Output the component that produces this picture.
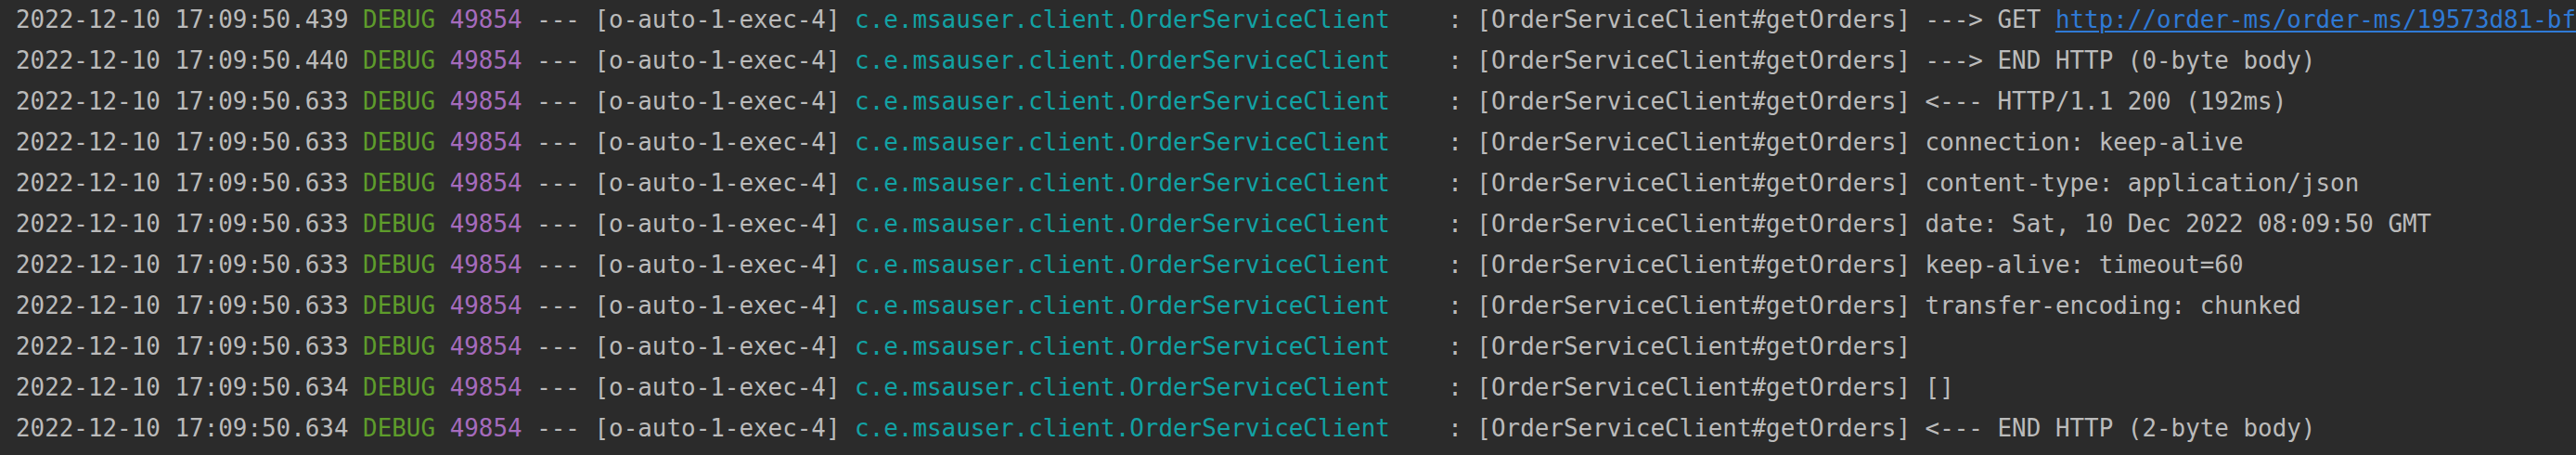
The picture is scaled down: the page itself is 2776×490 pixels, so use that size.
// App.tsx
const rows = [
  { ts: '2022-12-10 17:09:50.439', msg: '---> GET ', link: 'http://order-ms/order-ms/19573d81-bf' },
  { ts: '2022-12-10 17:09:50.440', msg: '---> END HTTP (0-byte body)' },
  { ts: '2022-12-10 17:09:50.633', msg: '<--- HTTP/1.1 200 (192ms)' },
  { ts: '2022-12-10 17:09:50.633', msg: 'connection: keep-alive' },
  { ts: '2022-12-10 17:09:50.633', msg: 'content-type: application/json' },
  { ts: '2022-12-10 17:09:50.633', msg: 'date: Sat, 10 Dec 2022 08:09:50 GMT' },
  { ts: '2022-12-10 17:09:50.633', msg: 'keep-alive: timeout=60' },
  { ts: '2022-12-10 17:09:50.633', msg: 'transfer-encoding: chunked' },
  { ts: '2022-12-10 17:09:50.633', msg: '' },
  { ts: '2022-12-10 17:09:50.634', msg: '[]' },
  { ts: '2022-12-10 17:09:50.634', msg: '<--- END HTTP (2-byte body)' },
];

export default function App() {
  return (
    <div className="w-[2776px] h-[490px] overflow-hidden bg-[#2b2b2b] pl-[17px]">
      {/* console output */}
      <div
        className="-mt-[1px] text-[25.9px] leading-[44px] text-[#bbbbbb] whitespace-pre"
        style={{ fontFamily: '"DejaVu Sans Mono", "Liberation Mono", monospace' }}
      >
        {rows.map((r, i) => (
          <div key={i} className="h-[44px]">
            <span>{r.ts} </span>
            <span className="text-[#5e9c2b]">DEBUG</span>
            <span> </span>
            <span className="text-[#a66bbd]">49854</span>
            <span> --- [o-auto-1-exec-4] </span>
            <span className="text-[#12a2a4]">c.e.msauser.client.OrderServiceClient</span>
            <span>    : [OrderServiceClient#getOrders] {r.msg}</span>
            {r.link && (
              <span className="text-[#2f7ad6] underline decoration-2 underline-offset-[3px]">{r.link}</span>
            )}
          </div>
        ))}
      </div>
    </div>
  );
}
